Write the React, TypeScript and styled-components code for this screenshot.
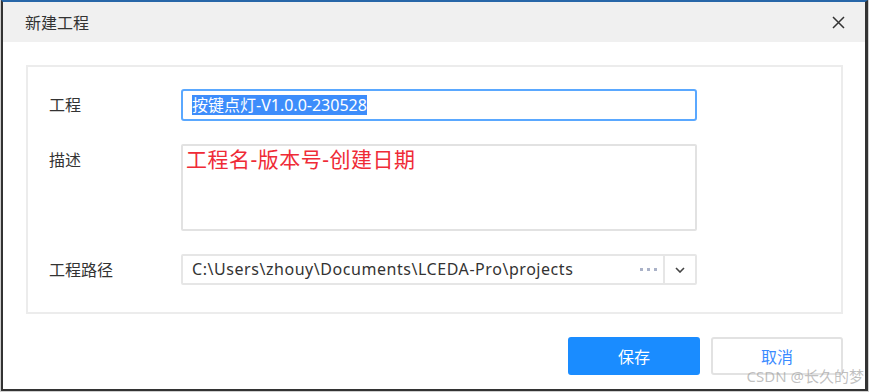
import styled, { createGlobalStyle } from 'styled-components';

const GlobalStyle = createGlobalStyle`
    html, body {
        margin: 0;
        padding: 0;
        background: #ffffff;
    }
    * {
        box-sizing: border-box;
    }
`;

const FONT = `"Segoe UI", "Noto Sans", "Noto Sans CJK SC", sans-serif`;

const StyledPage = styled.div`
    position: relative;
    width: 869px;
    height: 392px;
    padding: 0 1px 1px 1px;
    background: #cfcfcf;
    font-family: ${FONT};
`;

const StyledWindow = styled.div`
    display: flex;
    flex-direction: column;
    height: 100%;
    background: #ffffff;
    border-top: 2px solid #2766a8;
    border-left: 2px solid #333333;
    border-right: 3px solid #333333;
    border-bottom: 2px solid #333333;
`;

const StyledTitleBar = styled.div`
    display: flex;
    align-items: center;
    justify-content: space-between;
    height: 40px;
    padding: 0 17px 0 22px;
    background: #f0f0f0;
`;

const StyledTitle = styled.span`
    font-size: 16px;
    color: #333333;
`;

const StyledClose = styled.button`
    display: flex;
    align-items: center;
    justify-content: center;
    width: 20px;
    height: 20px;
    padding: 0;
    border: none;
    background: transparent;
`;

const StyledBody = styled.div`
    display: flex;
    flex-direction: column;
    padding: 23px 22px 0 23px;
    gap: 23px;
`;

const StyledPanel = styled.div`
    display: grid;
    grid-template-columns: 132px 516px;
    row-gap: 23px;
    padding: 22px 0 26px 21px;
    border: 2px solid #ececec;
`;

const StyledLabel = styled.label`
    font-size: 16px;
    line-height: 32px;
    color: #333333;
`;

const StyledInput = styled.div`
    display: flex;
    align-items: center;
    height: 32px;
    padding: 0 9px;
    border: 2px solid #5aa8ff;
    border-radius: 3px;
`;

const StyledSelection = styled.span`
    font-size: 16px;
    line-height: 20px;
    color: #ffffff;
    background: #3d8dfb;
`;

const StyledTextarea = styled.div`
    height: 87px;
    padding: 0 3px;
    border: 2px solid #e2e2e2;
    border-radius: 2px;
    font-size: 21px;
    letter-spacing: 0.5px;
    line-height: 26px;
    color: #ef2b37;
`;

const StyledSelect = styled.div`
    display: flex;
    height: 31px;
    border: 2px solid #e6e6e6;
    border-radius: 2px;
`;

const StyledPath = styled.span`
    flex: 1;
    padding-left: 9px;
    font-size: 16px;
    letter-spacing: 0.55px;
    line-height: 27px;
    color: #333333;
    white-space: nowrap;
`;

const StyledDots = styled.span`
    display: flex;
    align-items: center;
    gap: 4px;
    padding-right: 6px;

    i {
        width: 3px;
        height: 3px;
        background: #aab2c8;
    }
`;

const StyledDropButton = styled.span`
    display: flex;
    align-items: center;
    justify-content: center;
    width: 32px;
    border-left: 2px solid #e6e6e6;
`;

const StyledFooter = styled.div`
    display: flex;
    justify-content: flex-end;
    gap: 11px;
`;

const StyledButton = styled.button<{ primary?: boolean }>`
    width: 132px;
    height: 38px;
    border-radius: 3px;
    font-family: ${FONT};
    font-size: 16px;
    border: 2px solid ${({ primary }) => (primary ? '#1a8cff' : '#e2e2e2')};
    background: ${({ primary }) => (primary ? '#1a8cff' : '#ffffff')};
    color: ${({ primary }) => (primary ? '#ffffff' : '#3a8aff')};
`;

const StyledWatermark = styled.span`
    position: absolute;
    right: 5px;
    bottom: 6px;
    font-size: 15px;
    color: rgba(150, 150, 150, 0.6);
    font-family: ${FONT};
`;

export default function App() {
    return (
        <StyledPage>
            <GlobalStyle />
            <StyledWindow>
                <StyledTitleBar>
                    <StyledTitle>新建工程</StyledTitle>
                    <StyledClose>
                        <svg width="13" height="13" viewBox="0 0 13 13">
                            <path d="M1 1 L12 12 M12 1 L1 12" stroke="#333" strokeWidth="1.5" />
                        </svg>
                    </StyledClose>
                </StyledTitleBar>
                <StyledBody>
                    <StyledPanel>
                        <StyledLabel>工程</StyledLabel>
                        <StyledInput>
                            <StyledSelection>按键点灯-V1.0.0-230528</StyledSelection>
                        </StyledInput>

                        <StyledLabel>描述</StyledLabel>
                        <StyledTextarea>工程名-版本号-创建日期</StyledTextarea>

                        <StyledLabel>工程路径</StyledLabel>
                        <StyledSelect>
                            <StyledPath>C:\Users\zhouy\Documents\LCEDA-Pro\projects</StyledPath>
                            <StyledDots>
                                <i />
                                <i />
                                <i />
                            </StyledDots>
                            <StyledDropButton>
                                <svg width="10" height="6" viewBox="0 0 10 6">
                                    <path d="M1 1 L5 5 L9 1" stroke="#444" strokeWidth="1.6" fill="none" />
                                </svg>
                            </StyledDropButton>
                        </StyledSelect>
                    </StyledPanel>
                    <StyledFooter>
                        <StyledButton primary>保存</StyledButton>
                        <StyledButton>取消</StyledButton>
                    </StyledFooter>
                </StyledBody>
            </StyledWindow>
            <StyledWatermark>CSDN @长久的梦</StyledWatermark>
        </StyledPage>
    );
}
